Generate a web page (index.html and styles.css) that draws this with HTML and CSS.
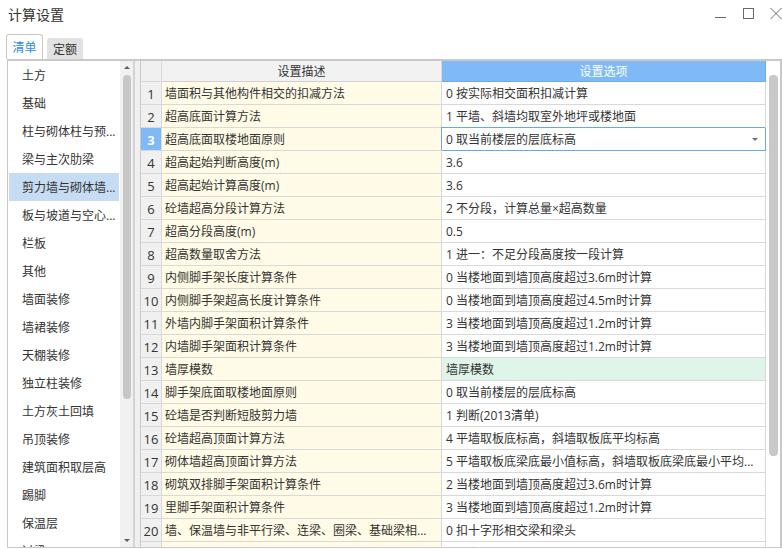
FILE: index.html
```html
<!DOCTYPE html>
<html lang="zh-CN">
<head>
<meta charset="utf-8">
<title>计算设置</title>
<link rel="stylesheet" href="styles.css">
</head>
<body>
<div class="window">
  <header class="titlebar">
    <span class="title">计算设置</span>
    <div class="controls">
      <svg class="ctl ctl-min" width="12" height="12" viewBox="0 0 12 12"><path d="M0 10.5H11" stroke="#6a6a6a" stroke-width="1"/></svg>
      <svg class="ctl ctl-max" width="12" height="12" viewBox="0 0 12 12"><rect x="1.5" y="1.5" width="10" height="10" fill="none" stroke="#6a6a6a" stroke-width="1"/></svg>
      <svg class="ctl" width="12" height="12" viewBox="0 0 12 12"><path d="M0.5 1L11.5 12M11.5 1L0.5 12" stroke="#6a6a6a" stroke-width="1"/></svg>
    </div>
  </header>
  <nav class="tabs">
    <div class="tab active">清单</div>
    <div class="tab">定额</div>
  </nav>
  <main class="frame">
    <aside class="side">
      <ul class="list">
        <li>土方</li>
        <li>基础</li>
        <li>柱与砌体柱与预...</li>
        <li>梁与主次肋梁</li>
        <li class="sel">剪力墙与砌体墙...</li>
        <li>板与坡道与空心...</li>
        <li>栏板</li>
        <li>其他</li>
        <li>墙面装修</li>
        <li>墙裙装修</li>
        <li>天棚装修</li>
        <li>独立柱装修</li>
        <li>土方灰土回填</li>
        <li>吊顶装修</li>
        <li>建筑面积取层高</li>
        <li>踢脚</li>
        <li>保温层</li>
        <li>过梁</li>
      </ul>
      <div class="sbar">
        <span class="arr arr-up"></span>
        <span class="sthumb"></span>
        <span class="sfill"></span>
        <span class="arr arr-down"></span>
      </div>
    </aside>
    <div class="splitter"></div>
    <section class="grid">
      <div class="table">
        <div class="row head">
          <div class="c num"></div>
          <div class="c desc">设置描述</div>
          <div class="c opt">设置选项</div>
        </div>
        <div class="row"><div class="c num">1</div><div class="c desc">墙面积与其他构件相交的扣减方法</div><div class="c opt">0 按实际相交面积扣减计算</div></div>
        <div class="row"><div class="c num">2</div><div class="c desc">超高底面计算方法</div><div class="c opt">1 平墙、斜墙均取室外地坪或楼地面</div></div>
        <div class="row"><div class="c num cur">3</div><div class="c desc">超高底面取楼地面原则</div><div class="c opt edit"><span>0 取当前楼层的层底标高</span><span class="caret"></span></div></div>
        <div class="row"><div class="c num">4</div><div class="c desc">超高起始判断高度(m)</div><div class="c opt">3.6</div></div>
        <div class="row"><div class="c num">5</div><div class="c desc">超高起始计算高度(m)</div><div class="c opt">3.6</div></div>
        <div class="row"><div class="c num">6</div><div class="c desc">砼墙超高分段计算方法</div><div class="c opt">2 不分段，计算总量×超高数量</div></div>
        <div class="row"><div class="c num">7</div><div class="c desc">超高分段高度(m)</div><div class="c opt">0.5</div></div>
        <div class="row"><div class="c num">8</div><div class="c desc">超高数量取舍方法</div><div class="c opt">1 进一：不足分段高度按一段计算</div></div>
        <div class="row"><div class="c num">9</div><div class="c desc">内侧脚手架长度计算条件</div><div class="c opt">0 当楼地面到墙顶高度超过3.6m时计算</div></div>
        <div class="row"><div class="c num">10</div><div class="c desc">内侧脚手架超高长度计算条件</div><div class="c opt">0 当楼地面到墙顶高度超过4.5m时计算</div></div>
        <div class="row"><div class="c num">11</div><div class="c desc">外墙内脚手架面积计算条件</div><div class="c opt">3 当楼地面到墙顶高度超过1.2m时计算</div></div>
        <div class="row"><div class="c num">12</div><div class="c desc">内墙脚手架面积计算条件</div><div class="c opt">3 当楼地面到墙顶高度超过1.2m时计算</div></div>
        <div class="row"><div class="c num">13</div><div class="c desc">墙厚模数</div><div class="c opt mint">墙厚模数</div></div>
        <div class="row"><div class="c num">14</div><div class="c desc">脚手架底面取楼地面原则</div><div class="c opt">0 取当前楼层的层底标高</div></div>
        <div class="row"><div class="c num">15</div><div class="c desc">砼墙是否判断短肢剪力墙</div><div class="c opt">1 判断(2013清单)</div></div>
        <div class="row"><div class="c num">16</div><div class="c desc">砼墙超高顶面计算方法</div><div class="c opt">4 平墙取板底标高，斜墙取板底平均标高</div></div>
        <div class="row"><div class="c num">17</div><div class="c desc">砌体墙超高顶面计算方法</div><div class="c opt">5 平墙取板底梁底最小值标高，斜墙取板底梁底最小平均...</div></div>
        <div class="row"><div class="c num">18</div><div class="c desc">砌筑双排脚手架面积计算条件</div><div class="c opt">2 当楼地面到墙顶高度超过3.6m时计算</div></div>
        <div class="row"><div class="c num">19</div><div class="c desc">里脚手架面积计算条件</div><div class="c opt">3 当楼地面到墙顶高度超过1.2m时计算</div></div>
        <div class="row"><div class="c num">20</div><div class="c desc">墙、保温墙与非平行梁、连梁、圈梁、基础梁相...</div><div class="c opt">0 扣十字形相交梁和梁头</div></div>
        <div class="row"><div class="c num">21</div><div class="c desc">砌块墙与构件相交计算方法</div><div class="c opt">0 按实际相交面积计算</div></div>
      </div>
      <div class="gbar"><span class="gthumb"></span></div>
    </section>
  </main>
</div>
</body>
</html>
```

FILE: styles.css
```css
* { box-sizing: border-box; margin: 0; padding: 0; }

html, body {
  width: 782px;
  height: 549px;
  overflow: hidden;
  background: #fff;
}

body {
  font-family: "Open Sans", "Noto Sans CJK SC", sans-serif;
  font-size: 12px;
  color: #333;
}

.window {
  display: flex;
  flex-direction: column;
  height: 549px;
}

/* title bar */
.titlebar {
  height: 30px;
  display: flex;
  align-items: flex-start;
  padding-left: 8px;
}

.title {
  flex: 1;
  font-size: 14px;
  line-height: 16px;
  margin-top: 7px;
  color: #333;
}

.controls {
  display: flex;
  margin-top: 7px;
}

.ctl { display: block; }
.ctl-min { margin-right: 15px; }
.ctl-max { margin-right: 16px; }

/* tabs */
.tabs {
  height: 29px;
  display: flex;
  align-items: flex-end;
  padding-left: 6px;
  gap: 4px;
}

.tab {
  width: 36px;
  height: 21px;
  line-height: 21px;
  padding-top: 1px;
  text-align: center;
  background: #e2e2e2;
  border-radius: 3px 3px 0 0;
  color: #333;
}

.tab.active {
  width: 37px;
  height: 25px;
  line-height: 24px;
  background: #fff;
  border: 1px solid #c8c8c8;
  border-bottom: none;
  color: #2f8ae8;
}

/* frame */
.frame {
  display: flex;
  margin-left: 7px;
  width: 775px;
  height: 489px;
  border-top: 2px solid #c9c9c9;
  border-left: 1px solid #c9c9c9;
  border-right: 2px solid #c9c9c9;
  border-bottom: 1px solid #c9c9c9;
  overflow: hidden;
}

/* left list */
.side {
  display: flex;
  width: 125px;
  flex: none;
}

.list {
  list-style: none;
  width: 112px;
  padding: 0 1px;
  overflow: hidden;
}

.list li {
  height: 28px;
  line-height: 28px;
  padding-top: 1px;
  padding-left: 13px;
  white-space: nowrap;
  overflow: hidden;
}

.list li.sel {
  background: #c6dcf3;
}

.sbar {
  width: 13px;
  background: #f1f1f1;
  display: flex;
  flex-direction: column;
  align-items: center;
}

.arr {
  width: 0;
  height: 0;
  border-left: 3px solid transparent;
  border-right: 3px solid transparent;
  flex: none;
}

.arr-up {
  border-bottom: 3px solid #5e5e5e;
  margin-top: 5px;
  margin-bottom: 6px;
}

.arr-down {
  border-top: 3px solid #5e5e5e;
  margin-bottom: 5px;
  margin-top: 2px;
}

.sthumb {
  width: 8px;
  height: 324px;
  border-radius: 4px;
  background: #c7c7c7;
  flex: none;
}

.sfill { flex: 1; }

.splitter {
  width: 7px;
  flex: none;
  border-left: 2px solid #d3d3d3;
  background: #f0f0f0;
}

/* grid */
.grid {
  display: flex;
  width: 640px;
  flex: none;
  border-left: 1px solid #c9c9c9;
}

.table {
  width: 625px;
  overflow: hidden;
}

.row {
  display: flex;
  height: 23px;
}

.c {
  height: 23px;
  line-height: 22px;
  padding-top: 1px;
  border-right: 1px solid #d9d9d9;
  border-bottom: 1px solid #d9d9d9;
  white-space: nowrap;
  overflow: hidden;
}

.num {
  width: 21px;
  background: #f0f0f0;
  text-align: center;
  font-size: 13px;
}

.num.cur {
  background: #80baf6;
  color: #fff;
  font-weight: bold;
}

.desc {
  width: 280px;
  background: #fffbe6;
  padding-left: 3px;
}

.opt {
  width: 324px;
  background: #fff;
  padding-left: 4px;
}

.opt.mint {
  background: #dff5e9;
}

.opt.edit {
  display: flex;
  align-items: center;
  padding-top: 0;
  padding-right: 7px;
  border-right-color: #69a7ea;
  border-bottom-color: #69a7ea;
  box-shadow: -1px -1px 0 0 #69a7ea;
}

.opt.edit span:first-child {
  line-height: 22px;
  padding-top: 1px;
}

.caret {
  margin-left: auto;
  width: 0;
  height: 0;
  border-left: 3px solid transparent;
  border-right: 3px solid transparent;
  border-top: 3px solid #707070;
}

.row.head {
  height: 21px;
}

.row.head .c {
  height: 21px;
  line-height: 20px;
  text-align: center;
  padding-left: 0;
}

.row.head .num { background: #f0f0f0; }
.row.head .desc { background: #f2f2f2; border-bottom-color: #d0d0d0; }
.row.head .opt {
  background: #80baf6;
  color: #fff;
  border-right-color: #6ea9ec;
  border-bottom-color: #6ea9ec;
}

.gbar {
  width: 14px;
  flex: none;
  background: #fff;
  padding-top: 14px;
  padding-left: 3px;
}

.gthumb {
  display: block;
  width: 9px;
  height: 381px;
  border-radius: 4px;
  background: #c8c8c8;
}
```
